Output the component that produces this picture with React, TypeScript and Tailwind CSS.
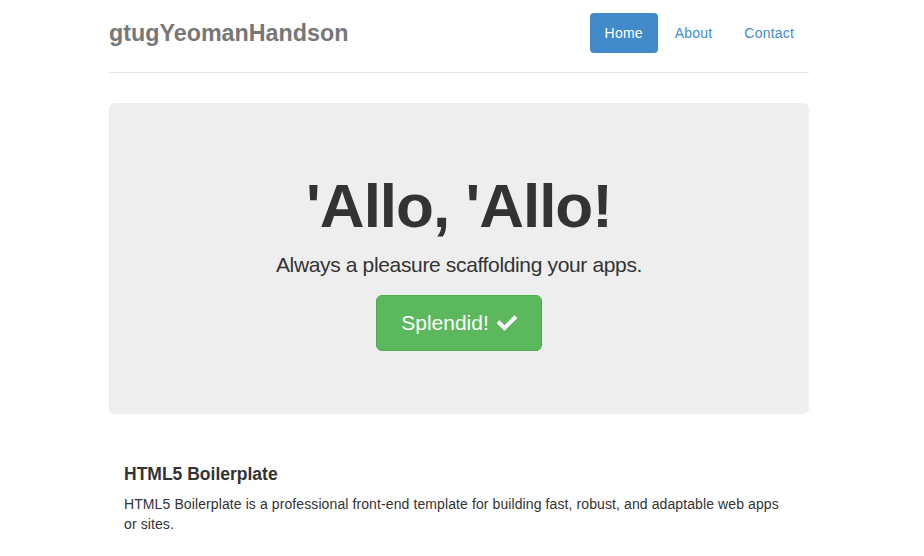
import { FaCheck } from 'react-icons/fa';

const navItems = ['Home', 'About', 'Contact'];

export default function App() {
	return (
		<div className="min-h-[556px] bg-white text-[#333] font-['Liberation_Sans',Arial,sans-serif] text-[14px] leading-[20px]">
			<div className="ml-[94px] w-[730px] px-[15px] pt-[13px]">
				{/* header */}
				<div className="flex items-start justify-between border-b border-[#e5e5e5] pb-[19px]">
					<h3 className="text-[23.3px] leading-[40px] font-bold text-[#777]">gtugYeomanHandson</h3>
					<ul className="flex">
						{navItems.map((item, i) => (
							<li key={item} className="ml-[2px]">
								<a
									href="#"
									className={`block rounded-[4px] px-[15px] py-[10px] tracking-[0.2px] ${i === 0 ? 'bg-[#428bca] text-white' : 'text-[#428bca]'}`}
								>
									{item}
								</a>
							</li>
						))}
					</ul>
				</div>

				{/* jumbotron */}
				<div className="mt-[30px] rounded-[6px] bg-[#eeeeee] px-[60px] pt-[48px] pb-[48px] text-center">
					<h1 className="mt-[20px] mb-[10px] text-[62px] leading-[69px] font-bold tracking-[-1px] text-[#333]">'Allo, 'Allo!</h1>
					<p className="mb-[15px] text-[21px] leading-[30px] font-light tracking-[-0.35px]">Always a pleasure scaffolding your apps.</p>
					<p className="mb-[15px]">
						<a
							href="#"
							className="inline-flex items-center gap-[8px] rounded-[6px] border border-[#4cae4c] bg-[#5cb85c] px-[24px] py-[13px] text-[21px] leading-[28px] text-white"
						>
							Splendid!
							<FaCheck className="h-[20px] w-[20px]" />
						</a>
					</p>
				</div>

				{/* marketing */}
				<div className="mt-[50px] px-[15px]">
					<h4 className="mb-[10px] text-[17.5px] leading-[20px] font-bold">HTML5 Boilerplate</h4>
					<p className="pr-[15px] tracking-[0.1px]">
						HTML5 Boilerplate is a professional front-end template for building fast, robust, and adaptable web apps or sites.
					</p>
				</div>
			</div>
		</div>
	);
}
